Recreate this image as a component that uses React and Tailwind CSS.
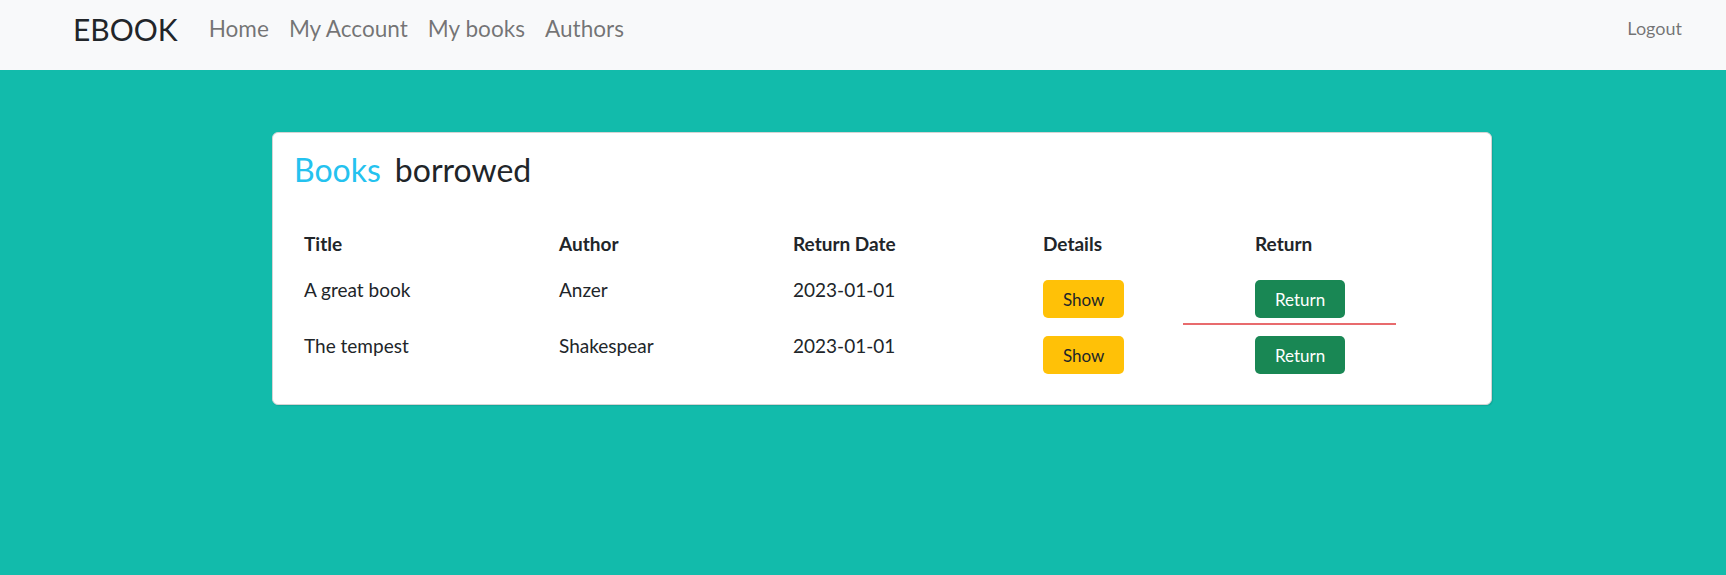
import React from "react";

const books = [
  { id: 1, title: "A great book", author: "Anzer", returnDate: "2023-01-01" },
  { id: 2, title: "The tempest", author: "Shakespear", returnDate: "2023-01-01" },
];

const cols = "grid grid-cols-[255px_234px_250px_212px_1fr]";

function Navbar() {
  return (
    <nav className="h-[70px] bg-[#f8f9fa] flex items-center pl-[73px] pr-[44px] pb-[13px]">
      <a className="text-[30px] leading-none text-[#212529]">EBOOK</a>
      <ul className="flex items-center ml-[21px] text-[22.6px] text-black/55">
        <li className="px-[10px]">Home</li>
        <li className="px-[10px]">My Account</li>
        <li className="px-[10px]">My books</li>
        <li className="px-[10px]">Authors</li>
      </ul>
      <a className="ml-auto text-[18px] text-black/55">Logout</a>
    </nav>
  );
}

function BorrowedTable() {
  return (
    <div className="relative mt-[30px]">
      <div className={`${cols} h-[47px] font-bold text-[19px] leading-[30px] text-[#212529]`}>
        <div className="pt-[10px] pl-[10px]">Title</div>
        <div className="pt-[10px] pl-[10px]">Author</div>
        <div className="pt-[10px] pl-[10px]">Return Date</div>
        <div className="pt-[10px] pl-[10px]">Details</div>
        <div className="pt-[10px] pl-[10px]">Return</div>
      </div>
      {books.map((book) => (
        <div key={book.id} className={`${cols} h-[56px] text-[19px] leading-[30px] text-[#212529] items-start`}>
          <div className="pt-[9px] pl-[10px]">{book.title}</div>
          <div className="pt-[9px] pl-[10px]">{book.author}</div>
          <div className="pt-[9px] pl-[10px]">{book.returnDate}</div>
          <div className="pt-[14px] pl-[10px]">
            <button className="h-[38px] px-[20px] rounded-[5px] bg-[#ffc107] text-[#212529] text-[17px] leading-none">
              Show
            </button>
          </div>
          <div className="pt-[14px] pl-[10px]">
            <button className="h-[38px] px-[20px] rounded-[5px] bg-[#198754] text-white text-[17px] leading-none">
              Return
            </button>
          </div>
        </div>
      ))}
      {/* stray red rule between the rows */}
      <div className="absolute left-[889px] top-[104px] w-[213px] h-[2px] bg-[#e86b6d]"></div>
    </div>
  );
}

export default function App() {
  return (
    <div className="min-h-[575px] bg-[#12bbab]" style={{ fontFamily: "Lato, 'Noto Sans', sans-serif" }}>
      <Navbar />
      <main className="pt-[62px] pl-[272px]">
        <div className="w-[1220px] bg-white rounded-[6px] border border-[#d4d4d4] shadow-[1px_1px_1px_rgba(0,0,0,0.1)] pt-[18px] pb-[26px] px-[21px]">
          <h4 className="text-[32px] leading-[38px] text-[#212529]">
            <span className="text-[#24c2ef]">Books</span>
            <span className="ml-[14px]">borrowed</span>
          </h4>
          <BorrowedTable />
        </div>
      </main>
    </div>
  );
}
